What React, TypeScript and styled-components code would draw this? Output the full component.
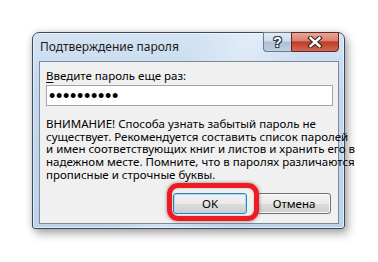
import React from "react";
import styled, { createGlobalStyle } from "styled-components";

const GlobalStyle = createGlobalStyle`
  html, body {
    margin: 0;
    padding: 0;
    background: #ffffff;
  }
  body {
    font-family: "Noto Sans", "Open Sans", sans-serif;
  }
`;

const Page = styled.div`
  width: 378px;
  height: 262px;
  box-sizing: border-box;
  padding: 32px 0 0 32px;
  background: #ffffff;
`;

const Window = styled.div`
  box-sizing: border-box;
  width: 313px;
  height: 197px;
  display: flex;
  flex-direction: column;
  padding: 0 5px 4px 6px;
  border: 1px solid #3a4a5e;
  border-radius: 7px 7px 3px 3px;
  background:
    linear-gradient(115deg, rgba(255,255,255,0) 40%, rgba(255,255,255,0.35) 55%, rgba(255,255,255,0) 70%),
    linear-gradient(180deg, #d3e3f3 0%, #c3d8ee 30%, #bcd3ea 100%);
  box-shadow:
    inset 0 0 0 1px rgba(255, 255, 255, 0.55),
    3px 5px 10px rgba(0, 0, 0, 0.3),
    0 0 7px rgba(0, 0, 0, 0.16);
`;

const TitleBar = styled.div`
  height: 28px;
  display: flex;
  justify-content: space-between;
  align-items: flex-start;
`;

const Title = styled.div`
  padding: 6px 0 0 1px;
  font-size: 12px;
  line-height: 16px;
  color: #1b1b1b;
  white-space: nowrap;
`;

const Controls = styled.div`
  display: flex;
  flex: 0 0 76px;
  height: 20px;
  margin-top: -1px;
`;

const HelpButton = styled.span`
  box-sizing: border-box;
  flex: 0 0 28px;
  height: 20px;
  display: flex;
  align-items: center;
  justify-content: center;
  border: 1px solid #6b7c92;
  border-right: 0;
  border-radius: 0 0 0 4px;
  background: linear-gradient(180deg, #e2eaf4 0%, #d0dcea 45%, #aebfd5 50%, #c0d0e2 100%);
`;

const CloseButton = styled.span`
  box-sizing: border-box;
  flex: 0 0 48px;
  height: 20px;
  display: flex;
  align-items: center;
  justify-content: center;
  border: 1px solid #5e2a22;
  border-radius: 0 0 4px 0;
  background-color: #c94a35;
  background-image: linear-gradient(180deg, #e8a597 0%, #db8170 42%, #c13b25 50%, #d26a55 100%);
`;

const HelpGlyph = styled.span`
  font-family: "Liberation Sans", Arial, sans-serif;
  font-weight: 700;
  font-size: 14px;
  line-height: 14px;
  color: #ffffff;
  text-shadow:
    1px 0 0 #2f3d4f, -1px 0 0 #2f3d4f, 0 1px 0 #2f3d4f, 0 -1px 0 #2f3d4f,
    1px 1px 0 #2f3d4f, -1px -1px 0 #2f3d4f, 1px -1px 0 #2f3d4f, -1px 1px 0 #2f3d4f;
`;

const Client = styled.div`
  flex: 1;
  box-sizing: border-box;
  display: flex;
  flex-direction: column;
  padding: 7px 5px 9px 6px;
  border: 1px solid #7b8998;
  background: #f0f0f0;
  color: #000000;
  font-size: 11.5px;
`;

const Label = styled.div`
  line-height: 14px;
  white-space: nowrap;
  u {
    text-decoration: underline;
    text-underline-offset: 2px;
  }
`;

const PasswordBox = styled.div`
  box-sizing: border-box;
  margin-top: 2px;
  height: 21px;
  display: flex;
  align-items: center;
  padding-left: 2px;
  border: 1px solid #a5a5a5;
  background: #ffffff;
`;

const Dots = styled.span`
  font-family: "Liberation Sans", Arial, sans-serif;
  font-size: 18px;
  line-height: 1;
  letter-spacing: 0.7px;
  color: #000;
`;

const Warning = styled.p`
  margin: 12px 0 0 0;
  line-height: 12.65px;
  white-space: nowrap;
`;

const ButtonRow = styled.div`
  margin-top: auto;
  display: flex;
  justify-content: flex-end;
  gap: 10px;
  padding-right: 2px;
`;

const Highlight = styled.div`
  position: relative;
  display: flex;
`;

const RedRing = styled.div`
  position: absolute;
  left: -6px;
  top: -10px;
  width: 92px;
  height: 38px;
  box-sizing: border-box;
  border: 5px solid #ee1b22;
  border-radius: 11px;
  box-shadow:
    0 0 3px 1px rgba(0, 0, 0, 0.28),
    inset 0 0 2px rgba(0, 0, 0, 0.3);
  pointer-events: none;
`;

const DialogButton = styled.button<{ $default?: boolean }>`
  box-sizing: border-box;
  width: 74px;
  height: 21px;
  padding: 0;
  font-family: inherit;
  font-size: 11.5px;
  color: #000;
  border: 1px solid ${(p) => (p.$default ? "#3c7fb1" : "#707070")};
  border-radius: 3px;
  background: linear-gradient(180deg, #f2f2f2 0%, #ebebeb 50%, #dddddd 50%, #cfcfcf 100%);
  box-shadow: inset 0 0 0 1px ${(p) => (p.$default ? "#9fdcf5" : "#fbfbfb")};
`;

const CloseIcon = () => (
  <svg width="16" height="12" viewBox="0 0 16 12">
    <path
      d="M3.5 2 L12.5 10 M12.5 2 L3.5 10"
      stroke="#3b2622"
      strokeWidth="4.6"
      fill="none"
      strokeLinecap="square"
    />
    <path
      d="M3.5 2 L12.5 10 M12.5 2 L3.5 10"
      stroke="#ffffff"
      strokeWidth="2.4"
      fill="none"
      strokeLinecap="square"
    />
  </svg>
);

export default function App() {
  return (
    <Page>
      <GlobalStyle />
      <Window>
        <TitleBar>
          <Title>Подтверждение пароля</Title>
          <Controls>
            <HelpButton>
              <HelpGlyph>?</HelpGlyph>
            </HelpButton>
            <CloseButton>
              <CloseIcon />
            </CloseButton>
          </Controls>
        </TitleBar>
        <Client>
          <Label>
            <u>В</u>ведите пароль еще раз:
          </Label>
          <PasswordBox>
            <Dots>••••••••••</Dots>
          </PasswordBox>
          <Warning>
            ВНИМАНИЕ! Способа узнать забытый пароль не
            <br />
            существует. Рекомендуется составить список паролей
            <br />
            и имен соответствующих книг и листов и хранить его в
            <br />
            надежном месте. Помните, что в паролях различаются
            <br />
            прописные и строчные буквы.
          </Warning>
          <ButtonRow>
            <Highlight>
              <DialogButton $default>OK</DialogButton>
              <RedRing />
            </Highlight>
            <DialogButton>Отмена</DialogButton>
          </ButtonRow>
        </Client>
      </Window>
    </Page>
  );
}
